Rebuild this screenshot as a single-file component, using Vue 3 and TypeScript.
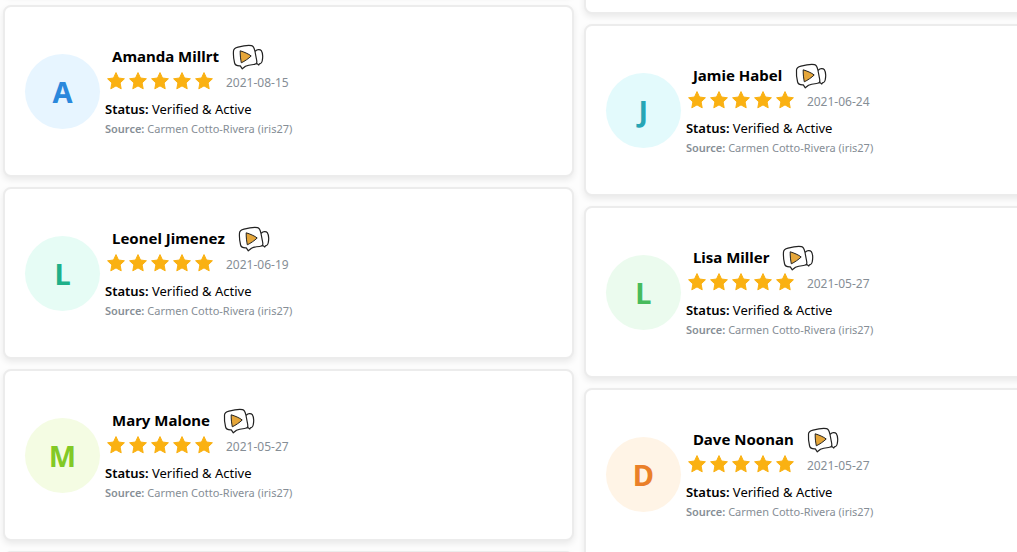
<script setup lang="ts">
interface Review {
  name: string
  date: string
  ink: string
  tint: string
}

const source = 'Carmen Cotto-Rivera (iris27)'

const columns: Review[][] = [
  [
    { name: 'Amanda Millrt', date: '2021-08-15', ink: '#2a88dc', tint: '#e7f5ff' },
    { name: 'Leonel Jimenez', date: '2021-06-19', ink: '#1fb089', tint: '#e6fcf5' },
    { name: 'Mary Malone', date: '2021-05-27', ink: '#82c926', tint: '#f4fce3' },
  ],
  [
    { name: 'Jamie Habel', date: '2021-06-24', ink: '#27a5b5', tint: '#e3fafc' },
    { name: 'Lisa Miller', date: '2021-05-27', ink: '#47bb5c', tint: '#ebfbee' },
    { name: 'Dave Noonan', date: '2021-05-27', ink: '#ea8029', tint: '#fff4e6' },
  ],
]
</script>

<template>
  <main class="board">
    <div v-for="(reviews, c) in columns" :key="c" class="column" :class="{ lower: c === 1 }">
      <div class="card"></div>
      <article v-for="r in reviews" :key="r.name" class="card">
        <div class="avatar" :style="{ color: r.ink, background: r.tint }">{{ r.name[0] }}</div>
        <div class="details">
          <div class="heading">
            <h3 class="name">{{ r.name }}</h3>
            <svg class="video" viewBox="0 -2 32 28" aria-hidden="true">
              <path class="line" d="M23.5 7C25 5.5 28 5 29.3 6.7C30.5 8.5 31 13 30.2 17C29.8 19 28.8 19.7 27.8 19.5L26.8 21L25.3 19.8L23.8 19.6" />
              <path class="line" d="M1.5 7C1.6 4.8 3 4 6 3.2C11 1.8 16 1 19.5 1.6C21.8 2 22.3 4 23 7.5L24.7 16.5C25.2 19.2 24.5 20.2 21.5 20.5C18 20.8 15.5 21.2 13.5 22.2L10.3 24.8L8.3 21.8C5.5 22 3.3 21.7 2.6 19C1.7 15.5 1.2 11 1.5 7Z" />
              <path class="play" d="M8.2 6.8C12 8 16.5 9.8 19.2 12C16.8 14.4 12.5 17.3 9.3 18.8C8.7 15.5 8 11 8.2 6.8Z" />
            </svg>
          </div>
          <div class="rating">
            <div class="stars" role="img" aria-label="5 out of 5 stars">
              <svg v-for="n in 5" :key="n" viewBox="0 0 20 20">
                <path d="M10 1.6L12.5 7L18.4 7.8L14.1 11.9L15.2 17.8L10 14.9L4.8 17.8L5.9 11.9L1.6 7.8L7.5 7Z" />
              </svg>
            </div>
            <time :datetime="r.date">{{ r.date }}</time>
          </div>
          <p class="status"><b>Status:</b> Verified &amp; Active</p>
          <p class="source"><b>Source:</b> {{ source }}</p>
        </div>
      </article>
      <div class="card"></div>
    </div>
  </main>
</template>

<style>
body {
  margin: 0;
  background: #fdfdfd;
}
</style>

<style scoped>
.board {
  box-sizing: border-box;
  height: 100vh;
  overflow: hidden;
  display: grid;
  grid-template-columns: 56.3% 56.3%;
  column-gap: 10px;
  padding-left: 3px;
  font-family: "Segoe UI", "Noto Sans", "Open Sans", sans-serif;
  color: #000;
}

.column {
  display: flex;
  flex-direction: column;
  gap: 10px;
  margin-top: -177px;
}

.column.lower {
  margin-top: -158px;
}

.card {
  box-sizing: border-box;
  flex: none;
  min-height: 172px;
  display: flex;
  align-items: center;
  gap: 5px;
  padding: 0 20px;
  border: 2px solid #ececec;
  border-radius: 8px;
  background: #fff;
  box-shadow: 0 3px 6px rgba(0, 0, 0, 0.08);
}

.avatar {
  flex: none;
  width: 75px;
  height: 75px;
  border-radius: 50%;
  font-size: 29px;
  font-weight: 700;
  line-height: 75px;
  text-align: center;
}

.heading {
  display: flex;
  align-items: center;
  gap: 13px;
  height: 26px;
  padding-left: 7px;
}

.name {
  margin: 0;
  font-size: 15px;
  font-weight: 700;
  line-height: 26px;
  white-space: nowrap;
}

.video {
  flex: none;
  width: 32px;
  height: 28px;
}

.line {
  fill: #fff;
  stroke: #222;
  stroke-width: 1.2;
  stroke-linejoin: round;
  stroke-linecap: round;
}

.play {
  fill: #e5a63a;
  stroke: #222;
  stroke-width: 1;
  stroke-linejoin: round;
}

.rating {
  display: flex;
  align-items: center;
  gap: 12px;
  height: 24px;
  margin-bottom: 6px;
}

.stars {
  display: flex;
  gap: 2px;
  padding-left: 1px;
}

.stars svg {
  width: 20px;
  height: 20px;
  fill: #fab112;
  stroke: #fab112;
  stroke-width: 1;
  stroke-linejoin: round;
}

time {
  padding-top: 3px;
  font-size: 12px;
  line-height: 20px;
  color: #868e96;
}

.status,
.source {
  margin: 0;
  line-height: 20px;
  white-space: nowrap;
}

.status {
  font-size: 13px;
}

.status b,
.source b {
  font-weight: 600;
}

.source {
  font-size: 11px;
  color: #868e96;
}
</style>
